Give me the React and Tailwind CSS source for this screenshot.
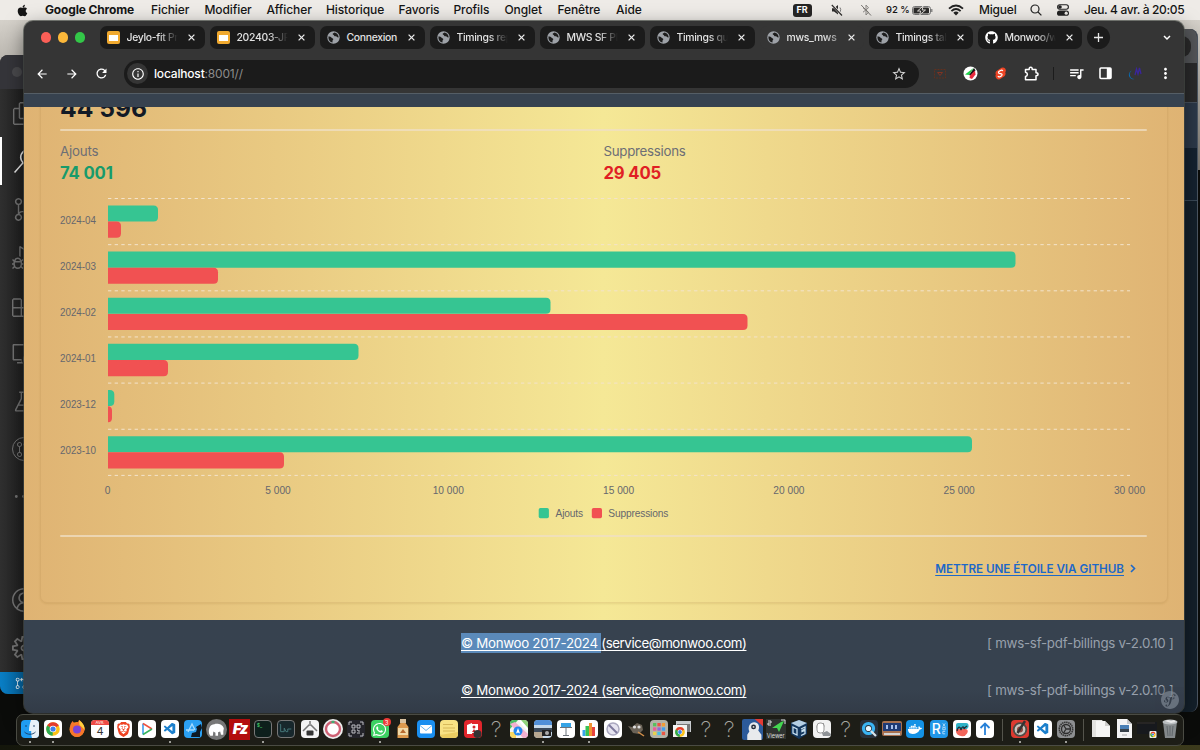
import React from "react";
import { FaApple, FaGithub, FaWhatsapp, FaDocker } from "react-icons/fa6";
import { VscVscode, VscFiles, VscSearch, VscSourceControl, VscDebugAlt, VscExtensions, VscRemoteExplorer, VscBeaker, VscAccount, VscSettingsGear, VscGitPullRequest, VscEllipsis } from "react-icons/vsc";
import { SiSymfony, SiBrave } from "react-icons/si";
import { MdOutlineInfo, MdArrowBack, MdArrowForward, MdRefresh, MdStarBorder, MdQueueMusic, MdMoreVert } from "react-icons/md";

const menus = [
  ["Fichier", "w-[53.5px]"],
  ["Modifier", "w-[62px]"],
  ["Afficher", "w-[59.5px]"],
  ["Historique", "w-[72.5px]"],
  ["Favoris", "w-[55px]"],
  ["Profils", "w-[51px]"],
  ["Onglet", "w-[53px]"],
  ["Fenêtre", "w-[58.5px]"],
  ["Aide", "w-[30px]"],
];

function MenuBar() {
  return (
    <header className="flex h-5 items-center bg-[#eeebe7] text-[12px] font-[450] text-[#151515]">
      <FaApple className="ml-4 h-[13px] w-[13px]" />
      <span className="ml-4 w-[106px] font-bold tracking-[-0.15px] whitespace-nowrap">Google Chrome</span>
      {menus.map(([label, w]) => (
        <span key={label} className={w + " shrink-0 tracking-[-0.1px] whitespace-nowrap"}>{label}</span>
      ))}
      <div className="flex flex-1 items-center">
        <span className="ml-[146.500px] flex h-[13px] w-[19px] items-center justify-center rounded-[3px] bg-[#262524] text-[9px] font-bold text-white">FR</span>
        <svg className="ml-[19px] h-[12px] w-[12px]" viewBox="0 0 12 12">
          <path d="M1 4.200h2L7 1v9.500L3 7.500H1z" fill="#2c2b2a" />
          <path d="M9 3.500q1.500 2 0 4.500" stroke="#777" fill="none" />
          <path d="M1 .5L11 11.500" stroke="#eeebe7" strokeWidth="2.400" />
          <path d="M.8 1L11 11.500" stroke="#2c2b2a" strokeWidth="1.100" />
        </svg>
        <svg className="ml-[17px] h-[12px] w-[12px]" viewBox="0 0 12 12" fill="none" stroke="#8a8784">
          <path d="M3 3.800L8.500 8.200 6 11V1l2.500 2.800L3 8.200" />
          <path d="M1.200 1L11 11.500" stroke="#76736f" />
        </svg>
        <span className="ml-[14.500px] w-[22px] text-[9.500px] whitespace-nowrap">92 %</span>
        <svg className="ml-[4px] h-[9px] w-[21px]" viewBox="0 0 21 9">
          <rect x="0.5" y="0.5" width="18" height="8" rx="2.200" fill="none" stroke="#777" />
          <rect x="1.500" y="1.500" width="15.500" height="6" rx="1.200" fill="#2c2b2a" />
          <path d="M11 .2L5.500 5h3.200l-1 3.800L13.500 4h-3.300z" fill="#2c2b2a" stroke="#eeebe7" strokeWidth=".9" />
          <path d="M19.800 3v3" stroke="#777" strokeWidth="1.200" />
        </svg>
        <svg className="ml-[15px] h-[12px] w-[16px]" viewBox="0 0 16 12" fill="none" stroke="#222" strokeWidth="1.900">
          <path d="M1 4.600Q8-1.600 15 4.600M3.400 7.100Q8 3 12.600 7.100" />
          <path d="M5.300 8.700Q8 6.300 10.700 8.700L8 11.600z" fill="#222" stroke="none" />
        </svg>
        <span className="ml-[15px] w-[36px] tracking-[-0.2px] whitespace-nowrap">Miguel</span>
        <svg className="ml-[15px] h-[12px] w-[12px]" viewBox="0 0 12 12" fill="none" stroke="#222" strokeWidth="1.200">
          <circle cx="5" cy="5" r="4" />
          <path d="M8 8l3.400 3.400" />
        </svg>
        <svg className="ml-[15px] h-[12px] w-[12px]" viewBox="0 0 12 12">
          <rect x="0.6" y="0.8" width="10.800" height="4.400" rx="2.200" fill="none" stroke="#222" strokeWidth="1.100" />
          <circle cx="3" cy="3" r="1.800" fill="#222" />
          <rect x="0" y="6.600" width="12" height="5.200" rx="2.600" fill="#222" />
          <circle cx="9.200" cy="9.200" r="1.600" fill="#eeebe7" />
        </svg>
        <span className="ml-[15px] tracking-[-0.36px] whitespace-nowrap">Jeu. 4 avr. à 20:05</span>
      </div>
    </header>
  );
}

const sideIcons = [
  [VscFiles, "h-[48px] text-[#747474]"],
  [VscSearch, "h-[48px] text-[#e8e8e8]"],
  [VscSourceControl, "h-[48px] text-[#747474]"],
  [VscDebugAlt, "h-[48px] text-[#747474]"],
  [VscExtensions, "h-[48px] text-[#747474]"],
  [VscRemoteExplorer, "h-[48px] text-[#747474]"],
  [VscBeaker, "h-[48px] text-[#747474]"],
  [VscGitPullRequest, "h-[48px] text-[#747474]"],
  [VscEllipsis, "h-[46px] text-[#747474]"],
];

function EditorWindow() {
  return (
    <div className="absolute top-[55px] left-0 flex h-[639px] w-[60px] flex-col overflow-hidden rounded-[8px] bg-[#2c2c2c]">
      <div className="flex h-[34px] shrink-0 items-center bg-[#35353a] pl-3">
        <span className="h-[10px] w-[10px] rounded-full bg-[#4a4a4d]" />
      </div>
      <div className="flex flex-col bg-linear-to-r from-[#303030] to-[#202020] to-[24px]">
        {sideIcons.map(([Icon, c], i) => (
          <div key={i} className={"flex shrink-0 items-center " + c + (i === 1 ? " border-l-[2px] border-white pl-[11px]" : " pl-[12px]")}>
            {i === 7 ? (
              <span className="flex h-6 w-6 items-center justify-center rounded-full border border-current"><Icon className="h-4 w-4" /></span>
            ) : (
              <Icon className={i === 1 ? "h-6 w-6 shrink-0" : "h-[23px] w-[23px] shrink-0"} />
            )}
          </div>
        ))}
      </div>
      <div className="flex flex-1 flex-col justify-end bg-linear-to-r from-[#303030] to-[#202020] to-[24px] text-[#747474]">
        <VscAccount className="mb-[24px] ml-[12px] h-[24px] w-[24px]" />
        <VscSettingsGear className="mb-[12px] ml-[12px] h-[24px] w-[24px]" />
      </div>
      <div className="flex h-[22px] shrink-0 items-center bg-linear-to-r from-[#0a7fc6] to-[#0566a3] to-[24px] pl-[15px] text-white">
        <VscGitPullRequest className="h-3 w-3" />
      </div>
    </div>
  );
}

function BackWindow() {
  return (
    <div className="absolute top-[29px] right-[2px] flex h-[683px] w-[60px] flex-col overflow-hidden rounded-[8px] border-r border-[#4c5663] bg-[#14202b]">
      <div className="flex h-[34px] shrink-0 items-center justify-end bg-[#55575a] pr-1.5">
        <span className="h-[21px] w-8 rounded-[9px] bg-[#2b2b2b]" />
      </div>
      <div className="h-[39px] shrink-0 bg-[#2b2b2c]" />
      <div className="h-[46px] shrink-0 border-t border-[#48525f] bg-[#2c394a]" />
      <div className="h-[53px] shrink-0 border-b border-[#3b4a58] bg-[#152230]" />
    </div>
  );
}

function Slides() {
  return (
    <span className="flex h-[13px] w-[13px] shrink-0 items-center justify-center rounded-[2px] bg-[#f0a92f]">
      <span className="h-[6px] w-[9px] bg-white" />
    </span>
  );
}

function Globe() {
  return (
    <svg className="h-[13px] w-[13px] shrink-0" viewBox="0 0 13 13">
      <circle cx="6.500" cy="6.500" r="6.200" fill="#9da1a7" />
      <path d="M1.400 5.400c1.500 0 2.600.2 3 1.200.3.8 1.600.5 1.900 1.400.2.7-.7 1-.8 1.700v1.900C3 11.200 1.200 9 1.400 5.400zM7.300 1.400c-.5.7-1.600.6-1.600 1.500 0 .8 1 .6 1.300 1.300.2.7.4 1.200 1.300 1 .9-.1 1.500.5 2.100 1.100l1.300.2C11.500 3.600 9.800 1.700 7.300 1.400z" fill="#1d1d1d" />
    </svg>
  );
}

const tabs = [
  { title: "Jeylo-fit Pr", icon: "slides", w: "w-[105px]" },
  { title: "202403-JF", icon: "slides", w: "w-[105px]" },
  { title: "Connexion", icon: "globe", w: "w-[105px]" },
  { title: "Timings rep", icon: "globe", w: "w-[105px]" },
  { title: "MWS SF PD", icon: "globe", w: "w-[105px]" },
  { title: "Timings qu", icon: "globe", w: "w-[105px]" },
  { title: "mws_mws", icon: "globe", w: "w-[104px]", active: true },
  { title: "Timings tab", icon: "globe", w: "w-[104px]" },
  { title: "Monwoo/w", icon: "github", w: "w-[104px]" },
];

function TabStrip() {
  return (
    <div className="flex h-[33px] shrink-0 items-center">
      <div className="ml-[16.500px] flex w-[59.500px] gap-[6.500px]">
        <span className="h-[10.500px] w-[10.500px] rounded-full bg-[#fb5f57]" />
        <span className="h-[10.500px] w-[10.500px] rounded-full bg-[#fcb83a]" />
        <span className="h-[10.500px] w-[10.500px] rounded-full bg-[#33c748]" />
      </div>
      <div className="flex gap-[5px]">
        {tabs.map((t) => (
          <div key={t.title} className={"flex h-[23px] shrink-0 items-center rounded-[7px] pl-[7px] text-white " + t.w + (t.active ? " bg-[#353535]" : " bg-[#1b1b1b]")}>
            {t.icon === "slides" ? <Slides /> : t.icon === "github" ? <FaGithub className="h-[13px] w-[13px] shrink-0" /> : <Globe />}
            <span className={"ml-[6.500px] w-[53.500px] shrink-0 text-[10.400px] font-medium tracking-[-0.3px] whitespace-nowrap text-[#e2e2e2] " + (t.title === "Connexion" ? "" : t.active ? "mask-r-from-70% mask-r-to-120%" : "mask-r-from-60% mask-r-to-96%")}>{t.title}</span>
            <svg className="ml-[8px] h-[7px] w-[7px] shrink-0" viewBox="0 0 7 7" stroke="#e8e8e8" strokeWidth="1.300">
              <path d="M.6.6l5.800 5.800M6.400.6L.6 6.400" />
            </svg>
          </div>
        ))}
      </div>
      <span className="ml-[5px] flex h-[23px] w-[23px] items-center justify-center rounded-full bg-[#1b1b1b]">
        <svg className="h-[9px] w-[9px]" viewBox="0 0 9 9" stroke="#e8e8e8" strokeWidth="1.300"><path d="M4.500 0v9M0 4.500h9" /></svg>
      </span>
      <svg className="ml-[53px] h-[6px] w-[8px]" viewBox="0 0 8 6" fill="none" stroke="#fff" strokeWidth="1.500"><path d="M1 1l3 3 3-3" /></svg>
    </div>
  );
}

function Toolbar() {
  return (
    <div className="flex h-[39px] shrink-0 items-center text-white">
      <MdArrowBack className="ml-[11px] h-[14px] w-[14px]" />
      <MdArrowForward className="ml-[16px] h-[14px] w-[14px]" />
      <MdRefresh className="ml-[15px] h-[15px] w-[15px]" />
      <div className="ml-[15px] flex h-[28px] w-[795px] items-center rounded-full bg-[#1b1b1b] pl-[3px]">
        <span className="flex h-[21px] w-[21px] items-center justify-center rounded-full bg-[#353535]"><MdOutlineInfo className="h-[14px] w-[14px]" /></span>
        <span className="ml-[6px] flex-1 text-[12px] tracking-[-0.18px] text-[#8c8c8c]"><span className="font-medium text-white">localhost</span>:8001//</span>
        <MdStarBorder className="mr-[12px] h-[16px] w-[16px] text-[#d0d0d0]" />
      </div>
      <svg className="ml-[14px] h-[12px] w-[14px]" viewBox="0 0 14 12" fill="none" stroke="#61301f">
        <rect x="1.500" y="1.500" width="11" height="8.500" strokeDasharray="2 1" />
        <path d="M4.500 4.500h5L7 7.500z" stroke="#803322" />
      </svg>
      <svg className="ml-[16px] h-[15px] w-[15px]" viewBox="0 0 15 15">
        <circle cx="7.500" cy="7.500" r="7" fill="#fff" />
        <path d="M2 8.500L10.500 2 6 9z" fill="#1ed24a" />
        <path d="M6 9l5-7 1.500 2.500-4.500 5z" fill="#151515" />
        <path d="M7 9.500l5-5 .5 4-3.500 4.500-2.500-1z" fill="#e92b3e" />
      </svg>
      <svg className="ml-[17px] h-[13px] w-[11px]" viewBox="0 0 11 13">
        <path d="M1.200 4.200L6.500.8a3 3 0 0 1 3.700 4.500 3.500 3.500 0 0 1-.5 3.700L4.800 12.200A3.300 3.300 0 0 1 .9 7.500a3 3 0 0 1 .3-3.300z" fill="#ee4424" />
        <path d="M7.800 4Q7 2.700 5.500 3.500L4 4.500q-1.200 1.300.3 1.900l2 .4q1.400.7.3 1.900l-1.500 1Q3.600 10.400 3 9" fill="none" stroke="#fff" strokeWidth="1.200" />
      </svg>
      <svg className="ml-[18px] h-[15px] w-[15px]" viewBox="0 0 15 15" fill="none" stroke="#fff" strokeWidth="1.500" strokeLinejoin="round">
        <path d="M1.500 3.500h3.700q-.3-2.200 1.500-2.200t1.500 2.200H12v3.300q2 0 2 1.500t-2 1.500v3.900H1.500v-3.200q1.900-.4 1.900-2.200T1.500 6.200z" />
      </svg>
      <span className="ml-[14px] h-[13px] w-px bg-[#1c1c1c]" />
      <MdQueueMusic className="ml-[14px] h-[17px] w-[17px]" />
      <svg className="ml-[14px] h-[13px] w-[13px]" viewBox="0 0 13 13">
        <rect x="1" y="1" width="11" height="10.500" rx="1" fill="none" stroke="#fff" strokeWidth="1.600" />
        <path d="M7.800 1H12v10.500H7.800z" fill="#fff" />
      </svg>
      <svg className="ml-[15px] h-[14px] w-[15px]" viewBox="0 0 15 14" fill="none">
        <path d="M5 3.500A4.600 4.600 0 0 0 7.500 12A4.300 4.300 0 1 1 5 3.500z" fill="#0a6bb0" />
        <path d="M8 8l1.500-6 1.500 5L12.500 1 14 7" stroke="#3a269a" strokeWidth="1.300" />
      </svg>
      <MdMoreVert className="ml-[15px] h-[17px] w-[17px]" />
    </div>
  );
}

const months = [
  { label: "2024-04", added: 50, removed: 13 },
  { label: "2024-03", added: 907.5, removed: 110 },
  { label: "2024-02", added: 442.5, removed: 639.5 },
  { label: "2024-01", added: 250.5, removed: 60 },
  { label: "2023-12", added: 6.3, removed: 4 },
  { label: "2023-10", added: 864, removed: 176 },
];
const ticks = ["0", "5 000", "10 000", "15 000", "20 000", "25 000", "30 000"];

function barPath(y, w) {
  const r = Math.min(4.5, w);
  return `M48 ${y}H${48 + w - r}q${r} 0 ${r} 4.5V${y + 11.6}q0 4.5 -${r} 4.5H48z`;
}

function Chart() {
  return (
    <svg className="block h-[336px] w-[1096px]" viewBox="0 0 1096 336" fontFamily="Liberation Sans, sans-serif" fontSize="10.2" fill="#66676d">
      {[0, 1, 2, 3, 4, 5, 6].map((i) => (
        <path key={i} d={`M48 ${13.5 + i * 46.15}H1070`} stroke="#f3e3cb" strokeWidth="1" strokeDasharray="3.330 3.330" />
      ))}
      {months.map((m, i) => (
        <g key={m.label}>
          <path d={barPath(20.4 + i * 46.15, m.added)} fill="#36c592" />
          <path d={barPath(36.6 + i * 46.15, m.removed)} fill="#f15152" />
          <text x="36" y={38.5 + i * 46.15} textAnchor="end" textLength="36" lengthAdjust="spacingAndGlyphs">{m.label}</text>
        </g>
      ))}
      {ticks.map((t, i) => (
        <text key={t} x={47.7 + i * 170.3} y="309" textAnchor="middle">{t}</text>
      ))}
      <rect x="478.700" y="323" width="10.200" height="10.200" rx="1.700" fill="#36c592" />
      <text x="495.500" y="331.700" textLength="27.500">Ajouts</text>
      <rect x="531.800" y="323" width="10.200" height="10.200" rx="1.700" fill="#f15152" />
      <text x="548.300" y="331.700" textLength="60">Suppressions</text>
    </svg>
  );
}

function Rule() {
  return <div className="h-[2px] w-[1087px] shrink-0 rounded bg-[#efdfc6] opacity-75" />;
}

function Content() {
  return (
    <main className="h-[513px] shrink-0 overflow-hidden bg-linear-to-r from-[#dfb373] via-[#f5e896] to-[#dfb373] px-4">
      <section className="-mt-5 flex h-[516px] w-[1128px] flex-col rounded-[7px] border border-[#b48c50]/20 px-[19px] shadow-[0_1px_2px_rgba(120,80,20,0.12)]">
        <div className="mt-[3px] h-[37px] shrink-0 text-[24.700px] leading-[34px] font-bold text-[#121a26]">44 596</div>
        <div className="mt-[0.500px]"><Rule /></div>
        <div className="mt-[10.500px] flex shrink-0 text-[13.300px] leading-[20px] text-[#6d6e75]">
          <div className="w-[543.500px]">
            <span className="tracking-[-0.2px]">Ajouts</span>
            <div className="mt-px text-[16.700px] leading-[23px] font-bold tracking-[-0.15px] text-[#189b6b]">74 001</div>
          </div>
          <div>
            <span className="tracking-[-0.28px]">Suppressions</span>
            <div className="mt-px text-[16.700px] leading-[23px] font-bold tracking-[-0.15px] text-[#e01f24]">29 405</div>
          </div>
        </div>
        <div className="h-[350px] shrink-0"><Chart /></div>
        <Rule />
        <a className="mt-[22.500px] mr-[12px] flex items-center justify-end text-[11.700px] leading-[18px] font-semibold text-[#1d68c8]">
          <span className="tracking-[-0.03px] whitespace-nowrap underline underline-offset-2">METTRE UNE ÉTOILE VIA GITHUB</span>
          <svg className="ml-[6px] h-[9px] w-[6px]" viewBox="0 0 6 9" fill="none" stroke="currentColor" strokeWidth="1.600"><path d="M1 1l3.500 3.500L1 8" /></svg>
        </a>
      </section>
    </main>
  );
}

function FooterRow({ selected }) {
  return (
    <div className="flex h-[46.500px] items-center text-[13.300px] leading-[20px] text-white">
      <span className="ml-[437px] w-[526px] tracking-[-0.37px] whitespace-nowrap underline underline-offset-2">
        <span className={"tracking-[-0.3px] " + (selected ? "bg-[#5b8aba] py-[2px]" : "")}>© Monwoo 2017-2024 </span><span className="tracking-[-0.42px]">(service@monwoo.com)</span>
      </span>
      <span className="tracking-[-0.23px] whitespace-nowrap text-[#98a0ac]">[ mws-sf-pdf-billings v-2.0.10 ]</span>
    </div>
  );
}

function ChromeWindow() {
  return (
    <div className="absolute top-[21px] left-6 flex h-[692px] w-[1160px] flex-col overflow-hidden rounded-[9px] bg-[#353535] shadow-[0_6px_20px_rgba(0,0,0,0.5),0_0_0_1px_rgba(90,95,90,0.7)]">
      <TabStrip />
      <Toolbar />
      <div className="h-[14px] shrink-0 border-t border-[#555e66] bg-[#37424f]" />
      <Content />
      <footer className="relative h-[94px] bg-linear-to-b from-[#37424f] via-[#37424f] via-75% to-[#323b47]">
        <FooterRow selected />
        <FooterRow />
        <div className="absolute right-0 bottom-0 flex h-[26px] w-[29px] items-center justify-center bg-[#343b48]/30">
          <SiSymfony className="h-[18px] w-[18px] text-[#8b94a0]/60" />
        </div>
      </footer>
    </div>
  );
}

function Tile({ className = "", children }) {
  return <span className={"relative flex h-[18px] w-[18px] items-center justify-center overflow-hidden rounded-[4px] " + className}>{children}</span>;
}
function Art({ children }) {
  return <svg className="h-[20px] w-[20px]" viewBox="0 0 20 20">{children}</svg>;
}
function Chrome() {
  return (
    <g>
      <circle cx="10" cy="10" r="7.500" fill="#fbc116" />
      <path d="M10 10L3.500 6.200A7.500 7.500 0 0 1 16.500 6.200z" fill="#e33b2e" />
      <path d="M10 10L3.500 6.200A7.500 7.500 0 0 0 9.600 17.500z" fill="#2da94f" />
      <circle cx="10" cy="10" r="3.700" fill="#fff" />
      <circle cx="10" cy="10" r="2.900" fill="#3f7fea" />
    </g>
  );
}
const Question = () => <span className="text-[22px] font-extralight text-[#a5a59f]">?</span>;

const dock = [
  { dot: true, el: <Tile className="bg-[#1f9cf0]"><svg viewBox="0 0 18 18" className="h-full w-full"><path d="M10 0h8v18h-7c-1-3-.8-5-.8-7H8C8 6 9 3 10 0z" fill="#e8f1f8" /><path d="M5 5v2M13 5v2M3.500 12c3 3 8 3 11 0" stroke="#173a63" fill="none" strokeWidth=".9" /></svg></Tile> },
  { dot: true, el: <Tile className="bg-white"><Art><Chrome /></Art></Tile> },
  { el: <Art><circle cx="10" cy="10.500" r="7.500" fill="#ff8a1f" /><path d="M3 8c0-3 2-5 2.500-6L8 5c3-1 3-2 4-4 3 2 6 6 5.500 10-1 4-4 7-8 7-4-.5-6.500-4-6.500-10z" fill="#f7762b" /><circle cx="10" cy="10.500" r="4" fill="#7a43d8" /><path d="M12 1c4 3 6 6 5.500 10-1-2-3-3-5-5z" fill="#ffd13e" /></Art> },
  { el: <Tile className="flex-col bg-white"><span className="flex h-[5px] w-full items-center justify-center bg-[#ee4b45] text-[4px] leading-none text-white">AVR.</span><span className="flex-1 text-[11px] leading-[13px] text-[#333]">4</span></Tile> },
  { el: <Tile className="bg-white"><SiBrave className="h-[15px] w-[15px] text-[#ef4423]" /></Tile> },
  { el: <Tile className="bg-white"><svg viewBox="0 0 18 18" className="h-full w-full" fill="none" strokeWidth="1.500"><path d="M5 3.500v11" stroke="#3596e8" /><path d="M5 3.500l9 5.500" stroke="#ef5340" /><path d="M14 9l-9 5.500" stroke="#35b35c" /></svg></Tile> },
  { dot: true, el: <Tile className="bg-white"><VscVscode className="h-[14px] w-[14px] text-[#1b7fcc]" /></Tile> },
  { el: <Tile className="bg-[#2ba0f2]"><svg viewBox="0 0 18 18" className="h-full w-full"><path d="M4 12L8 4l3 6M2 10h8" stroke="#a6dbff" strokeWidth="1.300" fill="none" /><path d="M7 17l1-4 4-1 1-3-1-2 5-3 1 4-2 4v5z" fill="#0d1a26" /></svg></Tile> },
  { el: <svg className="h-[21px] w-[21px]" viewBox="0 0 20 20"><circle cx="10" cy="10" r="10" fill="#777" /><path d="M3 14c-1-5 1-9 5-9 2-1 8-.5 9 4l-.5 2.500V15h-2.200l-.8-3-2 .5V16H9v-3l-2-1-.5 4H4z" fill="#fff" /></svg> },
  { el: <span className="flex h-[21px] w-[21px] items-center justify-center bg-[#b30d0d] text-[15px] font-black tracking-[-1.500px] text-white italic">Fz</span> },
  { dot: true, el: <Tile className="border border-[#777] bg-[#0d1f1c]"><span className="absolute top-[2px] left-[2px] text-[4.500px] font-bold text-[#3fbf62]">$_</span></Tile> },
  { el: <Tile className="border border-[#777] bg-[#17272c]"><svg viewBox="0 0 18 18" className="h-full w-full"><path d="M2 4h1v8h4V8l2 4h2V9h4" stroke="#497d80" fill="none" /></svg></Tile> },
  { el: <Tile className="bg-[#f4f4f4]"><svg viewBox="0 0 18 18" className="h-full w-full"><path d="M9 1v3M2 11l6-6h2l6 6" stroke="#777" fill="none" strokeWidth="1.500" /><rect x="5.500" y="10.500" width="7" height="5" rx="1" fill="#333" /></svg></Tile> },
  { el: <Art><circle cx="10" cy="10" r="10" fill="#eee" /><circle cx="10" cy="10" r="7" fill="#fff" stroke="#cf6174" strokeWidth="2.400" /><path d="M8.500 3h3" stroke="#3fae73" strokeWidth="2.400" /></Art> },
  { el: <Tile className="bg-[#24242a]"><svg viewBox="0 0 18 18" className="h-full w-full" fill="none" stroke="#bdbdc2"><path d="M2 5V2h3M13 2h3v3M16 13v3h-3M5 16H2v-3" /><path d="M5 5h3v3H5zM10 5h3v3h-3zM5 10h3v3H5zM10 10h1v1h2M10 13h3" strokeWidth="1" /></svg></Tile> },
  { dot: true, el: <span className="relative flex"><Tile className="bg-[#3dd162]"><FaWhatsapp className="h-[15px] w-[15px] text-white" /></Tile><span className="absolute -top-[2px] -right-[2px] flex h-[8px] w-[8px] items-center justify-center rounded-full bg-[#ee3a36] text-[6px] text-white">3</span></span> },
  { el: <Art><rect x="7" y="0" width="6" height="4" fill="#d9c2a0" /><path d="M7.500 4h5l3 4v11h-11V8z" fill="#dd9a4e" /><rect x="5" y="9" width="10" height="7" fill="#f1d9a7" /><path d="M7 14l3-4 3 4z" fill="#b86a2e" /></Art> },
  { el: <Tile className="bg-[#1a8ff0]"><svg viewBox="0 0 18 18" className="h-full w-full"><rect x="3" y="5" width="12" height="8.500" rx="1" fill="#fff" /><path d="M3 5.500l6 5 6-5" stroke="#6bb5ee" fill="none" /></svg></Tile> },
  { el: <Tile className="bg-[#f8e284]"><svg viewBox="0 0 18 18" className="h-full w-full"><path d="M3 4.500h10M3 8h12M3 11h12" stroke="#cfae4f" strokeWidth=".8" /><path d="M0 15l18-3v6H0z" fill="#ebcd62" /></svg></Tile> },
  { el: <Tile className="bg-[#e1252b]"><svg viewBox="0 0 18 18" className="h-full w-full"><path d="M3 5l5-2v11H3zM7 4h7v9H7z" fill="#fff" /><circle cx="10" cy="7" r="1.500" fill="#d2282d" /><path d="M8 12l2-3 2 3z" fill="#d2282d" /><circle cx="13.500" cy="14" r="4" fill="#333" /></svg></Tile> },
  { el: <Question /> },
  { el: <Tile className="bg-[#f2f2ee]"><svg viewBox="0 0 18 18" className="h-full w-full"><path d="M0 0h8L0 9z" fill="#49bf63" /><path d="M11 0h7v8z" fill="#8fd27a" /><path d="M0 4l5-2 13 12v4h-5z" fill="#f3b0d0" /><path d="M10 1l8 9" stroke="#fff" strokeWidth="2" /><path d="M0 12h6v6H0z" fill="#f8d760" /><circle cx="8" cy="11" r="4.500" fill="#2388f1" /><path d="M8 8l2 5.500-2-1-2 1z" fill="#fff" /></svg></Tile> },
  { dot: true, el: <Tile className="bg-[#c8daea]"><svg viewBox="0 0 18 18" className="h-full w-full"><path d="M0 0h18v5H0z" fill="#5290d8" /><path d="M0 8h18v4H0z" fill="#3c4a5a" /><path d="M0 12h9v6H0z" fill="#b7a791" /><rect x="8" y="10" width="9" height="6" fill="#222" /><circle cx="13" cy="13" r="2" fill="#aaa" /></svg></Tile> },
  { el: <Tile className="bg-white"><svg viewBox="0 0 18 18" className="h-full w-full"><rect x="4" y="3" width="10" height="4" fill="#36a4e6" /><path d="M3 7.500h12M9 7v8M6 15.500h6" stroke="#6d747c" fill="none" /></svg></Tile> },
  { dot: true, el: <Tile className="bg-white"><svg viewBox="0 0 18 18" className="h-full w-full"><path d="M2.500 10h3v6h-3z" fill="#39a3ed" /><path d="M5.500 6h3.500v10H5.500z" fill="#39c255" /><path d="M9 3h3v13H9z" fill="#f19434" /><path d="M12 7h3v9h-3z" fill="#e8443e" /></svg></Tile> },
  { el: <Tile className="bg-white"><svg viewBox="0 0 18 18" className="h-full w-full"><circle cx="9" cy="9" r="6" fill="#e6e4f0" stroke="#aaa8bf" strokeWidth="1.500" /><path d="M5 5l8 8" stroke="#7e7a9d" strokeWidth="2" /></svg></Tile> },
  { el: <Art><path d="M2 7l4 1 5-4 5 2 1 5-4 4-6-1-2-3z" fill="#6b6357" /><circle cx="8.500" cy="8" r="1.600" fill="#ddd" /><circle cx="13" cy="8" r="1.600" fill="#ddd" /><path d="M12 13l6 4" stroke="#d38f4a" strokeWidth="1.500" /></Art> },
  { el: <Tile className="bg-[#b4b3a8]"><svg viewBox="0 0 18 18" className="h-full w-full"><rect x="3" y="3" width="3.300" height="3.300" fill="#58c15c" /><rect x="7.400" y="3" width="3.300" height="3.300" fill="#ef5145" /><rect x="11.800" y="3" width="3.300" height="3.300" fill="#f49b34" /><rect x="3" y="7.400" width="3.300" height="3.300" fill="#ef5a9a" /><rect x="7.400" y="7.400" width="3.300" height="3.300" fill="#9664d8" /><rect x="11.800" y="7.400" width="3.300" height="3.300" fill="#3f9cf2" /><rect x="3" y="11.800" width="3.300" height="3.300" fill="#e8d14e" /><rect x="7.400" y="11.800" width="3.300" height="3.300" fill="#46bfe3" /><rect x="11.800" y="11.800" width="3.300" height="3.300" fill="#e95645" /></svg></Tile> },
  { el: <Art><path d="M4 2h15v11H4z" fill="#c9cccf" /><path d="M5 5h13v8H5z" fill="#777" /><path d="M1 6h14v12H1z" fill="#f3f3f3" /><g transform="translate(1.500 6.500) scale(.65)"><Chrome /></g></Art> },
  { el: <Question /> },
  { el: <Question /> },
  { el: <svg className="h-[21px] w-[21px]" viewBox="0 0 20 20"><rect width="20" height="20" rx="2" fill="#2c5a9a" /><path d="M12 0h8v7z" fill="#e43b35" /><path d="M5 20v-5l2-3c-2-5 1-9 4.500-9 4 0 6 4 4 8l3 4v5z" fill="#e8eaed" /><circle cx="11" cy="7.500" r="2.300" fill="#222b38" /><circle cx="11" cy="7.500" r=".9" fill="#ddd" /></svg> },
  { el: <span className="relative flex h-[20px] w-[20px] items-end justify-center bg-[#2f3330] text-[5.500px] leading-[6px] text-[#ddd]"><svg viewBox="0 0 20 14" className="absolute top-0 left-0 h-[14px] w-[20px]"><path d="M6 9L15 3l3-1-5 11-2-4z" fill="#44d651" /><path d="M15 1h4v4M2 2h3v2H2v2h3" stroke="#ddd" fill="none" /></svg>Viewer</span> },
  { el: <Art><path d="M10 1l8 3v11l-8 5-8-5V4z" fill="#14375e" /><path d="M10 1l8 3-8 4-8-4z" fill="#b5cfe4" /><path d="M4 8l4 2v6l-4-2zM12 10l4-2v2l-3 1.500v1l3-1v3l-4 2" stroke="#c7dfef" fill="none" strokeWidth="1.300" /></Art> },
  { el: <Tile className="bg-[#f1f1f1]"><svg viewBox="0 0 18 18" className="h-full w-full"><path d="M6 3c-3 2-2 8 1 8s5-5 3-8" stroke="#777" fill="none" /><rect x="4" y="3" width="7" height="10" rx="3" fill="#fff" stroke="#999" /><path d="M9 13l5-2 4 3v2h-8z" fill="#8e9296" /></svg></Tile> },
  { el: <Question /> },
  { el: <Tile className="bg-[#29313b]"><svg viewBox="0 0 18 18" className="h-full w-full"><circle cx="8.500" cy="8.500" r="5" fill="none" stroke="#3ab4f4" strokeWidth="3.200" /><circle cx="8.500" cy="8.500" r="2.600" fill="#e8f6ff" /><path d="M11 11l5 5" stroke="#d9e3ea" strokeWidth="2.200" /></svg></Tile> },
  { el: <Art><rect x="0" y="2" width="20" height="15" rx="2" fill="#a77150" /><rect x="1" y="4" width="18" height="8" fill="#1e3a75" /><path d="M4 6h2v4H4zM9 6h2v4H9zM13 6h2v4h-2z" fill="#a9c0ea" /><path d="M2 14h16v2H2z" fill="#d4d4d4" /></Art> },
  { el: <Tile className="bg-[#1492e6]"><FaDocker className="h-[14px] w-[14px] text-white" /></Tile> },
  { el: <Tile className="bg-[#2196e8]"><span className="text-[14px] leading-none font-medium text-white">R</span><svg viewBox="0 0 5 16" className="ml-px h-[14px] w-[4px]" fill="none" stroke="#d9efff"><path d="M1 1l3 4M4 1L1 5M1 6h3v3H1zM4 11H1v3h3" strokeWidth=".9" /></svg></Tile> },
  { el: <Tile className="bg-white"><svg viewBox="0 0 18 18" className="h-full w-full"><path d="M5 3h8q3 0 2.500 4L14 9H3V5q0-2 2-2z" fill="#2fb3c7" /><path d="M3 9h10q3 1 1 4.500T8 16q-4-.5-5-4z" fill="#f1655a" /><path d="M4 11c1-5 3-5 4-1 1-4 3-4 3-1 1-2 2-2 3-3" fill="none" stroke="#20303c" strokeWidth="1.300" /></svg></Tile> },
  { el: <Tile className="bg-white"><svg viewBox="0 0 18 18" className="h-full w-full"><path d="M9 15V4M4.500 8L9 3.500 13.500 8" fill="none" stroke="#2781d8" strokeWidth="1.800" /></svg></Tile> },
];

const dockRight = [
  { dot: true, el: <Tile className="bg-[#dd3a30]"><svg viewBox="0 0 18 18" className="h-full w-full"><circle cx="9" cy="9.500" r="6.300" fill="#c9c6bf" stroke="#4e4b46" strokeWidth="1.800" /><circle cx="9" cy="9.500" r="3" fill="#8b4a42" /><path d="M6.500 13L14 1" stroke="#333" strokeWidth="2.400" /></svg></Tile> },
  { el: <Tile className="bg-white"><VscVscode className="h-[14px] w-[14px] text-[#1b7fcc]" /></Tile> },
  { dot: true, el: <Tile className="bg-[#8d8f91]"><svg viewBox="0 0 18 18" className="h-full w-full"><circle cx="9" cy="9" r="6.700" fill="none" stroke="#333" strokeWidth="1.500" strokeDasharray="1.500 .6" /><circle cx="9" cy="9" r="4.500" fill="none" stroke="#2e2e2e" strokeWidth="1.300" /><path d="M9 9h5M9 9L6.500 5M9 9l-2.500 4" stroke="#2e2e2e" strokeWidth="1.300" /></svg></Tile> },
];
const dockFiles = [
  <Art><path d="M1 1h10l3 4v13H1z" fill="#e2e2e0" /><path d="M5 2h9l5 5v11H5z" fill="#f5f5f4" /><path d="M14 2v5h5z" fill="#cdcdcb" /></Art>,
  <Art><path d="M3 0h10l5 5v14H3z" fill="#f5f5f5" /><path d="M13 0v5h5z" fill="#c9cacc" /><rect x="6" y="6" width="9" height="7" fill="#4b80b6" /><path d="M6 10h9v3H6z" fill="#39424b" /><path d="M8 16h5" stroke="#aaa" /></Art>,
  <Art><rect y="3" width="20" height="12" fill="#17191d" /><path d="M0 4h18" stroke="#39332d" /><rect x="12.500" y="12" width="7" height="7" rx="1" fill="#eee" /><g transform="translate(12.500 12) scale(.35)"><Chrome /></g></Art>,
  <Art><path d="M3 3h14l-2 16H5z" fill="#84898b" /><ellipse cx="10" cy="3" rx="7.500" ry="2.500" fill="#b9bdbf" /><path d="M5 2l3-1 3 1 3-1 2 2-5 1z" fill="#e9e9e9" /><path d="M7 7l1 10M10 7v10M13 7l-1 10" stroke="#60666a" /></Art>,
];

function DockItem({ dot, el }) {
  return (
    <div className="relative flex h-[28px] w-[23.300px] shrink-0 items-center justify-center">
      {el}
      {dot && <span className="absolute bottom-0 h-[2px] w-[2px] rounded-full bg-[#c8c8c4]" />}
    </div>
  );
}

function Dock() {
  return (
    <div className="absolute top-[714px] left-4 flex h-[32px] w-[1168px] items-start rounded-[7px] border border-[#4a4b43] bg-[#1d1d17] pl-[1.500px]">
      {dock.map((d, i) => <DockItem key={i} {...d} />)}
      <span className="mt-1 ml-[5px] h-[22px] w-px shrink-0 bg-[#54544c]" />
      <span className="w-[5px] shrink-0" />
      {dockRight.map((d, i) => <DockItem key={i} {...d} />)}
      <span className="mt-1 ml-[5px] h-[22px] w-px shrink-0 bg-[#54544c]" />
      <span className="w-[5px] shrink-0" />
      {dockFiles.map((el, i) => <DockItem key={i} el={el} />)}
    </div>
  );
}

export default function App() {
  return (
    <div className="relative h-[750px] w-[1200px] overflow-hidden bg-[#0b0c0a] font-[Inter,sans-serif]">
      <MenuBar />
      <div className="h-[150px] bg-linear-to-b from-[#d5d1ca] to-[#77736c]" />
      <EditorWindow />
      <BackWindow />
      <ChromeWindow />
      <div className="absolute bottom-0 left-0 h-[5px] w-full bg-linear-to-r from-[#14160b] via-[#26270f] via-60% to-[#3b3a1c]" />
      <Dock />
    </div>
  );
}
